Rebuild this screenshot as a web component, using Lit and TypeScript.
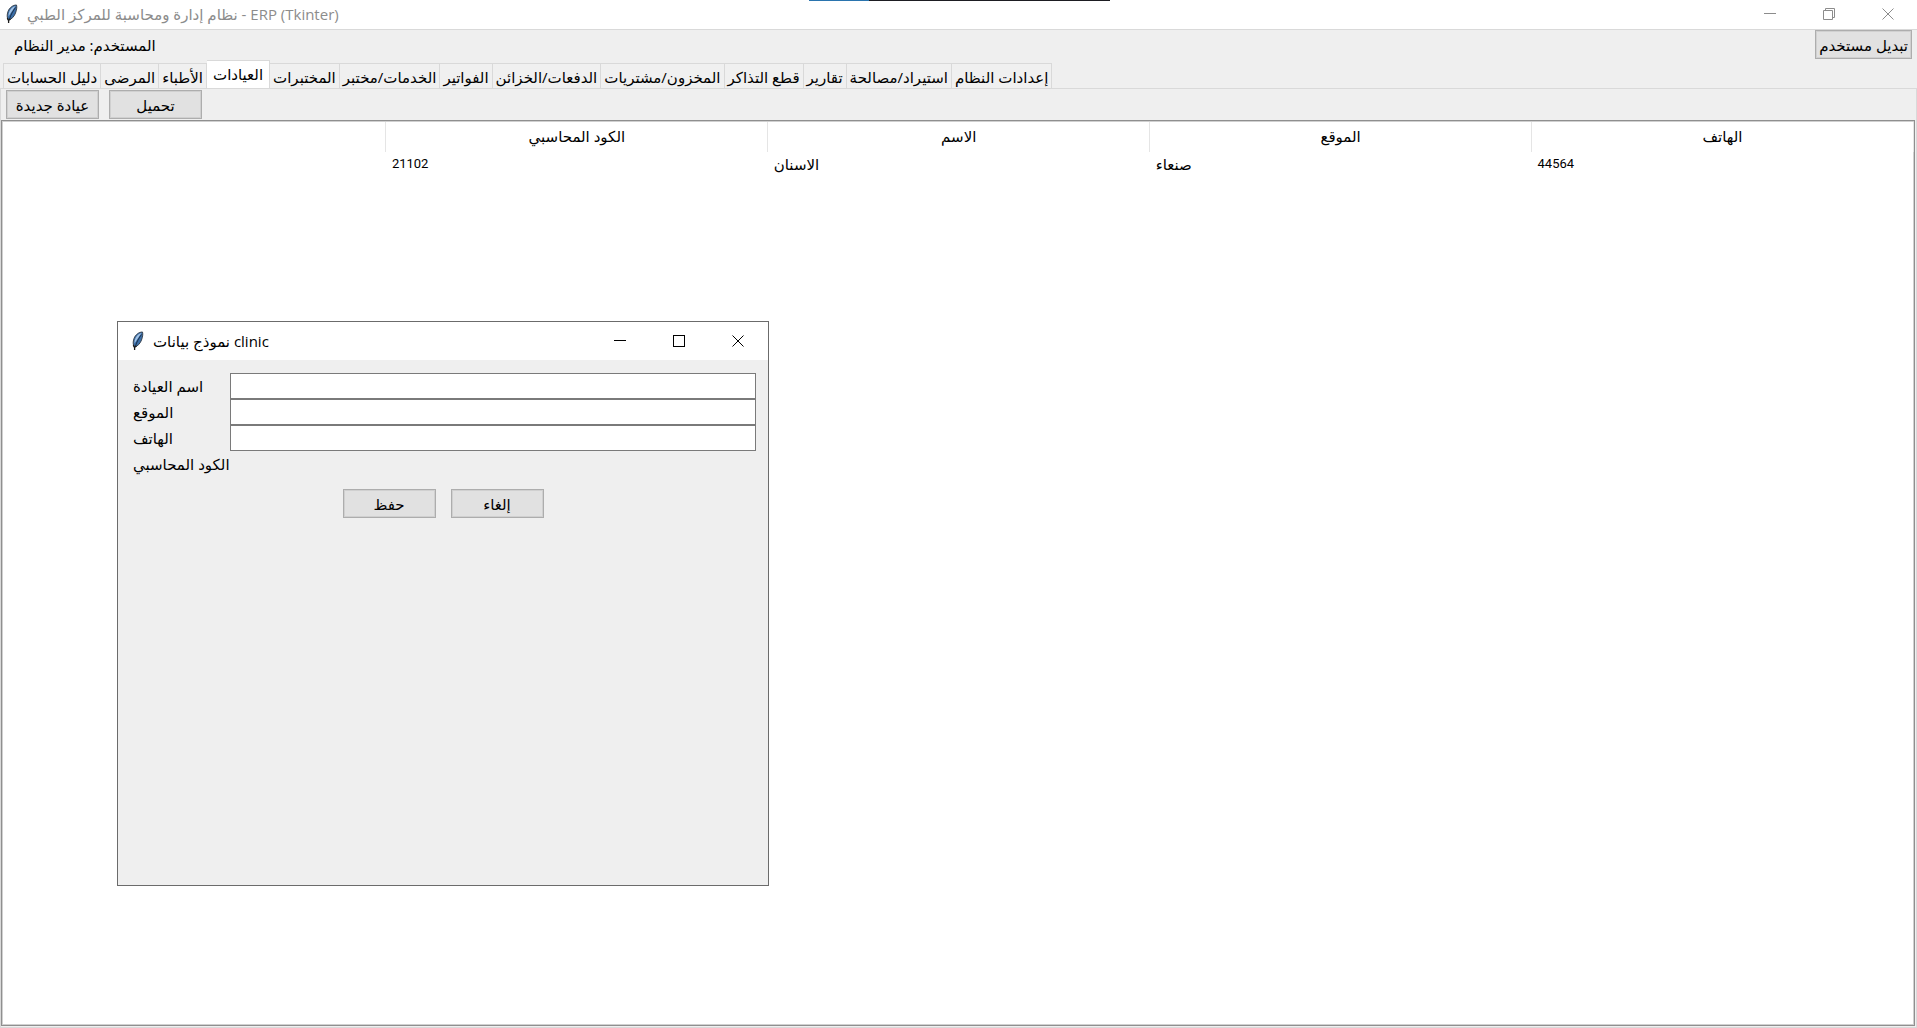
import { LitElement, html, css, svg } from "lit";
import { customElement, state } from "lit/decorators.js";
import { classMap } from "lit/directives/class-map.js";

const FONT = css`"Open Sans", "DejaVu Sans", sans-serif`;

const feather = html`
  <svg class="feather" width="14" height="20" viewBox="0 0 14 20" aria-hidden="true">
    <path d="M11.500 1C8 1 4.500 3.500 3 7.500C1.800 11 2 13.500 3.200 16C6.500 15.500 9.300 12.500 10.500 9C11.500 6 12.200 3.500 11.500 1Z" fill="#3a6ea8" stroke="#3a4450" stroke-width="1" />
    <path d="M10.500 2C7 3 4.500 6 3.700 9.500L3.500 12.500C5.500 9 7.800 6 10.500 2Z" fill="#a4c4e6" />
    <path d="M10.500 3.500C8 7 5.800 10.500 4.300 15.500" fill="none" stroke="#1a2f4a" stroke-width="1" />
    <path d="M2.300 14L3.500 16.500L5.500 15M3.600 15.500V19" fill="none" stroke="#1c1c1c" stroke-width="1.300" />
  </svg>
`;

const glyphs = {
  minimize: svg`<path d="M0 5.500H12" />`,
  maximize: svg`<rect x="0.500" y="0.500" width="11" height="11" />`,
  restore: svg`<path d="M0.500 2.500H9.500V11.500H0.500ZM2.500 2.500V0.500H11.500V9.500H9.500" />`,
  close: svg`<path d="M0.500 0.500L11.500 11.500M11.500 0.500L0.500 11.500" />`,
};

type Glyph = keyof typeof glyphs;

const windowButton = (glyph: Glyph, label: string) => html`
  <button class="window-button" type="button" aria-label=${label}>
    <svg width="12" height="12" viewBox="0 0 12 12" fill="none" stroke="currentColor" aria-hidden="true">
      ${glyphs[glyph]}
    </svg>
  </button>
`;

const titleBarStyles = css`
  .title-bar {
    display: flex;
    align-items: stretch;
    background: #fff;
  }
  .title {
    flex: 1;
    display: flex;
    align-items: center;
    gap: 8px;
    margin: 0;
    font-size: 15px;
    font-weight: 400;
    white-space: nowrap;
  }
  .feather {
    flex: none;
  }
  .window-button {
    display: flex;
    align-items: center;
    justify-content: center;
    width: 59px;
    padding: 0;
    border: 0;
    background: none;
    color: inherit;
  }
`;

const controlStyles = css`
  *,
  *::before {
    box-sizing: border-box;
  }
  .push {
    min-width: 93px;
    height: 29px;
    padding: 0 3px;
    border: 1px solid #adadad;
    outline: 1px solid #d0d0d0;
    outline-offset: -2px;
    background: #e1e1e1;
    color: #000;
    font: inherit;
    white-space: nowrap;
  }
`;

@customElement("clinic-form")
class ClinicForm extends LitElement {
  static styles = [
    titleBarStyles,
    controlStyles,
    css`
      :host {
        display: flex;
        flex-direction: column;
        box-sizing: border-box;
        border: 1px solid #6b6b6b;
        background: #efefef;
        color: #000;
        font: 15px/20px ${FONT};
      }
      .title-bar {
        height: 38px;
        padding: 0 1px 0 13px;
      }
      .form {
        display: flex;
        flex-direction: column;
        gap: 12px;
        padding: 13px 12px;
      }
      .fields {
        display: grid;
        grid-template-columns: 97px 1fr;
        grid-auto-rows: 26px;
        align-items: center;
        padding-left: 3px;
      }
      .label {
        white-space: nowrap;
      }
      .entry {
        width: 100%;
        height: 26px;
        padding: 0 4px;
        border: 1px solid #7a7a7a;
        border-radius: 0;
        background: #fff;
        font: inherit;
      }
      .actions {
        display: flex;
        justify-content: center;
        gap: 15px;
      }
    `,
  ];

  render() {
    const fields = ["اسم العيادة", "الموقع", "الهاتف"];
    return html`
      <header class="title-bar">
        <h2 class="title">${feather}<span>نموذج بيانات clinic</span></h2>
        ${windowButton("minimize", "تصغير")} ${windowButton("maximize", "تكبير")}
        ${windowButton("close", "إغلاق")}
      </header>
      <form class="form" @submit=${(e: Event) => e.preventDefault()}>
        <div class="fields">
          ${fields.map(
            (name, i) => html`
              <label class="label" for="field-${i}">${name}</label>
              <input class="entry" id="field-${i}" type="text" />
            `,
          )}
          <span class="label">الكود المحاسبي</span>
        </div>
        <div class="actions">
          <button class="push" type="submit">حفظ</button>
          <button class="push" type="button">إلغاء</button>
        </div>
      </form>
    `;
  }
}

@customElement("app-root")
class AppRoot extends LitElement {
  @state() private selected = 3;

  private tabs = [
    "دليل الحسابات",
    "المرضى",
    "الأطباء",
    "العيادات",
    "المختبرات",
    "الخدمات/مختبر",
    "الفواتير",
    "الدفعات/الخزائن",
    "المخزون/مشتريات",
    "قطع التذاكر",
    "تقارير",
    "استيراد/مصالحة",
    "إعدادات النظام",
  ];

  private columns = ["", "الكود المحاسبي", "الاسم", "الموقع", "الهاتف"];
  private rows = [["", "21102", "الاسنان", "صنعاء", "44564"]];

  static styles = [
    titleBarStyles,
    controlStyles,
    css`
      :host {
        position: relative;
        display: flex;
        flex-direction: column;
        min-height: 100vh;
        box-sizing: border-box;
        overflow: hidden;
        background: #efefef;
        color: #000;
        font: 15px/20px ${FONT};
      }
      .title-bar {
        height: 30px;
        padding: 0 0 2px 5px;
        border-bottom: 1px solid #d9d9d9;
        color: #8c8c8c;
      }
      .top-strip {
        position: absolute;
        top: 0;
        left: 809px;
        width: 301px;
        height: 1px;
        background: linear-gradient(to right, #2a74ae 60px, #1d1d22 60px);
      }
      .user-bar {
        display: flex;
        justify-content: space-between;
        align-items: flex-start;
        padding: 0 5px 0 14px;
      }
      .user {
        padding-top: 5px;
      }
      .tabs {
        display: flex;
        align-items: flex-end;
        height: 29px;
        padding-left: 3px;
      }
      .tab {
        height: 25px;
        padding: 1px 3px 0;
        border: 1px solid #d9d9d9;
        border-left: 0;
        border-bottom: 0;
        background: #f0f0f0;
        color: #000;
        font: inherit;
        line-height: 20px;
        white-space: nowrap;
      }
      .tab:first-child {
        border-left: 1px solid #d9d9d9;
      }
      .tab.active {
        height: 28px;
        padding: 0 6px 2px;
        background: #fff;
      }
      .pane {
        flex: 1;
        display: flex;
        flex-direction: column;
        border: 1px solid #d9d9d9;
        padding: 0 1px 1px 0;
      }
      .tools {
        display: flex;
        gap: 10px;
        padding: 1px 5px;
      }
      .tree {
        flex: 1;
        padding: 1px 0 1px 2px;
        border: 1px solid #8f8f8f;
        background: #fff;
        box-shadow: inset 0 0 0 1px #d0d0d0;
      }
      .table {
        width: 100%;
        border-collapse: collapse;
        table-layout: fixed;
      }
      .heading {
        height: 30px;
        padding: 0 0 2px;
        border-right: 1px solid #e5e5e5;
        font-weight: 400;
        text-align: center;
      }
      .cell {
        height: 23px;
        padding: 0 6px;
        text-align: left;
      }
      .number {
        font-family: Roboto, sans-serif;
        font-size: 13px;
      }
      .form-window {
        position: absolute;
        left: 117px;
        top: 321px;
        width: 652px;
        height: 565px;
      }
    `,
  ];

  render() {
    return html`
      <header class="title-bar">
        <h1 class="title">${feather}<span>نظام إدارة ومحاسبة للمركز الطبي - ERP (Tkinter)</span></h1>
        ${windowButton("minimize", "تصغير")} ${windowButton("restore", "استعادة")}
        ${windowButton("close", "إغلاق")}
      </header>
      <div class="top-strip"></div>
      <div class="user-bar">
        <span class="user">المستخدم: مدير النظام</span>
        <button class="push" type="button">تبديل مستخدم</button>
      </div>
      <div class="tabs" role="tablist">
        ${this.tabs.map(
          (name, i) => html`
            <button
              class=${classMap({ tab: true, active: i === this.selected })}
              role="tab"
              type="button"
              aria-selected=${i === this.selected}
              @click=${() => (this.selected = i)}
            >
              ${name}
            </button>
          `,
        )}
      </div>
      <main class="pane" role="tabpanel">
        <div class="tools">
          <button class="push" type="button">عيادة جديدة</button>
          <button class="push" type="button">تحميل</button>
        </div>
        <div class="tree">
          <table class="table">
            <thead>
              <tr>
                ${this.columns.map((name) => html`<th class="heading" scope="col">${name}</th>`)}
              </tr>
            </thead>
            <tbody>
              ${this.rows.map(
                (row) => html`<tr>
                  ${row.map(
                    (value) =>
                      html`<td class=${classMap({ cell: true, number: /^\d+$/.test(value) })}>${value}</td>`,
                  )}
                </tr>`,
              )}
            </tbody>
          </table>
        </div>
      </main>
      <clinic-form class="form-window" role="dialog"></clinic-form>
    `;
  }
}
